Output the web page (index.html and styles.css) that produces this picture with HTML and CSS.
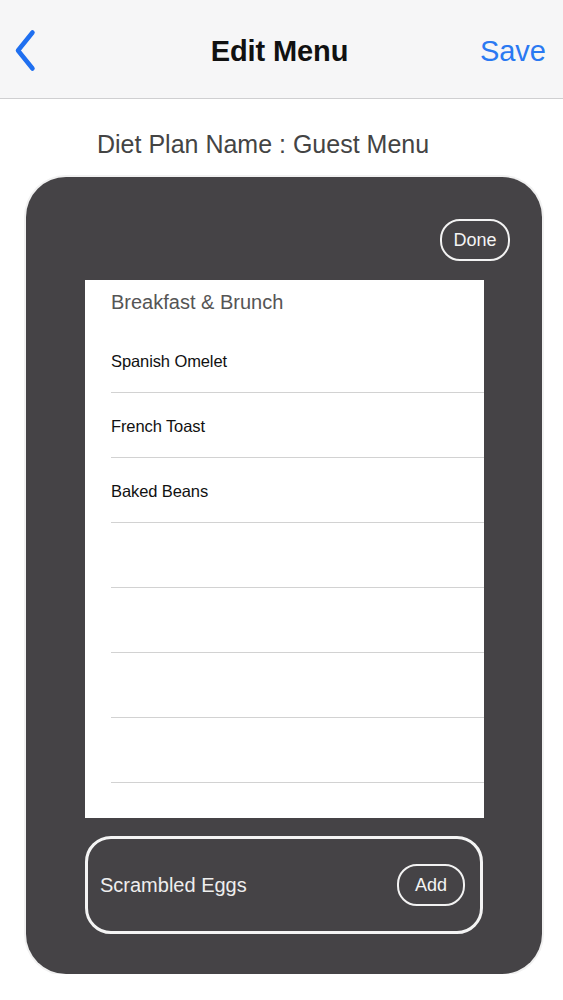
FILE: index.html
```html
<!DOCTYPE html>
<html>
<head>
<meta charset="utf-8">
<link rel="stylesheet" href="styles.css">
</head>
<body>
<header class="navbar">
  <div class="nav-left">
    <svg class="back" width="24" height="44" viewBox="0 0 24 44">
      <path d="M19.5 3.5 L5 21.5 L19.5 39.5" fill="none" stroke="#1f6ff0" stroke-width="4.5" stroke-linecap="round" stroke-linejoin="round"/>
    </svg>
  </div>
  <div class="nav-title">Edit Menu</div>
  <div class="nav-right">Save</div>
</header>
<div class="plan-name">Diet Plan Name : Guest Menu</div>
<div class="panel">
  <div class="panel-top">
    <div class="pill done">Done</div>
  </div>
  <div class="list">
    <div class="list-header">Breakfast &amp; Brunch</div>
    <div class="row"><span>Spanish Omelet</span></div>
    <div class="row"><span>French Toast</span></div>
    <div class="row"><span>Baked Beans</span></div>
    <div class="row"></div>
    <div class="row"></div>
    <div class="row"></div>
    <div class="row"></div>
  </div>
  <div class="input-box">
    <span class="input-text">Scrambled Eggs</span>
    <div class="pill add">Add</div>
  </div>
</div>
</body>
</html>
```
FILE: styles.css
```css
* { box-sizing: border-box; }
body {
  margin: 0;
  background: #ffffff;
  font-family: "Liberation Sans", Arial, sans-serif;
}
.navbar {
  height: 99px;
  background: #f6f6f7;
  border-bottom: 1px solid #cfcfd1;
  display: grid;
  grid-template-columns: 1fr auto 1fr;
  align-items: center;
  padding: 4px 17px 0 13px;
}
.nav-left { display: flex; align-items: center; }
.back { display: block; }
.nav-title {
  font-size: 29px;
  font-weight: bold;
  color: #111;
  letter-spacing: -0.1px;
}
.nav-right {
  justify-self: end;
  font-size: 29px;
  color: #2a79f2;
}
.plan-name {
  font-size: 25px;
  color: #444;
  line-height: 30px;
  padding: 30px 0 0 97px;
  height: 78px;
}
.panel {
  margin: 0 21px 0 26px;
  height: 797px;
  background: #454346;
  border-radius: 40px;
  box-shadow: 0 0 0 2px #f1f1f1;
  padding: 42px 58px 0 59px;
  display: flex;
  flex-direction: column;
}
.panel-top {
  display: flex;
  justify-content: flex-end;
  margin-right: -26px;
  height: 42px;
  margin-bottom: 19px;
}
.pill {
  height: 42px;
  border: 2px solid #f2f2f2;
  border-radius: 20px;
  color: #f4f4f4;
  font-size: 18px;
  display: flex;
  align-items: center;
  justify-content: center;
}
.done { width: 70px; }
.add { width: 68px; }
.list {
  background: #ffffff;
  height: 538px;
}
.list-header {
  height: 48px;
  padding-left: 26px;
  font-size: 20px;
  color: #555;
  line-height: 44px;
}
.row {
  height: 65px;
  margin-left: 26px;
  border-bottom: 1.5px solid #d2d2d2;
  display: flex;
  align-items: center;
  padding-top: 2px;
  font-size: 16.5px;
  color: #111;
  letter-spacing: -0.1px;
}
.input-box {
  margin-top: 18px;
  height: 98px;
  border: 3px solid #f4f4f4;
  border-radius: 26px;
  display: flex;
  align-items: center;
  justify-content: space-between;
  padding: 0 15px 0 12px;
  margin-right: 1px;
}
.input-text {
  font-size: 20px;
  color: #eeeeee;
}
```
